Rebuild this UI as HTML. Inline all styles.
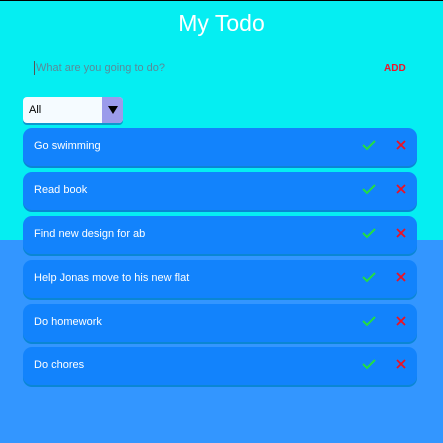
<!DOCTYPE html>
<html><head><meta charset="utf-8"><style>
*{margin:0;padding:0;box-sizing:border-box}
html,body{width:443px;height:443px;overflow:hidden}
body{font-family:"Liberation Sans",sans-serif;background:linear-gradient(#05eef2 0,#05eef2 240px,#3396ff 240px);position:relative;border-top:1px solid #000}
h1{position:absolute;top:9px;left:0;width:443px;text-align:center;color:#fff;font-size:23px;font-weight:normal}
.inp{position:absolute;top:60px;left:34px;font-size:11px;color:#5a8a98;border-left:1px solid #555;padding-left:1px;height:14px;line-height:14px}
.add{position:absolute;top:62px;left:384px;font-size:10px;font-weight:bold;color:#f0122a}
.sel{position:absolute;top:96px;left:23px;width:100px;height:26px;background:#f5fbff;border-radius:4px;box-shadow:0 2px 0 #0a9ad0;overflow:hidden}
.sel span{position:absolute;left:6px;top:7px;font-size:11px;color:#000}
.sel .ar{position:absolute;left:79px;top:0;width:21px;height:26px;background:#9b9beb}
.sel .ar:after{content:"";position:absolute;left:6px;top:9px;border-left:5px solid transparent;border-right:5px solid transparent;border-top:8px solid #000}
.card{position:absolute;left:23px;width:394px;height:38px;background:#1283fc;border-radius:9px;box-shadow:0 2px 0 #0a86d4}
.card span{position:absolute;left:11px;top:12px;font-size:11px;color:#fff}
.card svg{position:absolute;top:11px}
</style></head><body>
<h1>My Todo</h1>
<div class="inp">What are you going to do?</div>
<div class="add">ADD</div>
<div class="sel"><span>All</span><div class="ar"></div></div>
<div class="card" style="top:127px"><span>Go swimming</span><svg style="left:339px" width="14" height="12"><path d="M1 6L5 10L13 2" stroke="#22dd44" stroke-width="2" fill="none"/></svg><svg style="left:373px;top:12px" width="10" height="10"><path d="M1 1L9 9M9 1L1 9" stroke="#ee1122" stroke-width="1.8"/></svg></div>
<div class="card" style="top:171px"><span>Read book</span><svg style="left:339px" width="14" height="12"><path d="M1 6L5 10L13 2" stroke="#22dd44" stroke-width="2" fill="none"/></svg><svg style="left:373px;top:12px" width="10" height="10"><path d="M1 1L9 9M9 1L1 9" stroke="#ee1122" stroke-width="1.8"/></svg></div>
<div class="card" style="top:215px"><span>Find new design for ab</span><svg style="left:339px" width="14" height="12"><path d="M1 6L5 10L13 2" stroke="#22dd44" stroke-width="2" fill="none"/></svg><svg style="left:373px;top:12px" width="10" height="10"><path d="M1 1L9 9M9 1L1 9" stroke="#ee1122" stroke-width="1.8"/></svg></div>
<div class="card" style="top:259px"><span>Help Jonas move to his new flat</span><svg style="left:339px" width="14" height="12"><path d="M1 6L5 10L13 2" stroke="#22dd44" stroke-width="2" fill="none"/></svg><svg style="left:373px;top:12px" width="10" height="10"><path d="M1 1L9 9M9 1L1 9" stroke="#ee1122" stroke-width="1.8"/></svg></div>
<div class="card" style="top:303px"><span>Do homework</span><svg style="left:339px" width="14" height="12"><path d="M1 6L5 10L13 2" stroke="#22dd44" stroke-width="2" fill="none"/></svg><svg style="left:373px;top:12px" width="10" height="10"><path d="M1 1L9 9M9 1L1 9" stroke="#ee1122" stroke-width="1.8"/></svg></div>
<div class="card" style="top:346px"><span>Do chores</span><svg style="left:339px" width="14" height="12"><path d="M1 6L5 10L13 2" stroke="#22dd44" stroke-width="2" fill="none"/></svg><svg style="left:373px;top:12px" width="10" height="10"><path d="M1 1L9 9M9 1L1 9" stroke="#ee1122" stroke-width="1.8"/></svg></div>
</body></html>
